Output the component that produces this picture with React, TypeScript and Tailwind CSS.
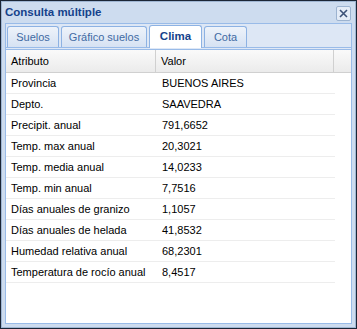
import React from 'react';

const rows: [string, string][] = [
  ['Provincia', 'BUENOS AIRES'],
  ['Depto.', 'SAAVEDRA'],
  ['Precipit. anual', '791,6652'],
  ['Temp. max anual', '20,3021'],
  ['Temp. media anual', '14,0233'],
  ['Temp. min anual', '7,7516'],
  ['Días anuales de granizo', '1,1057'],
  ['Días anuales de helada', '41,8532'],
  ['Humedad relativa anual', '68,2301'],
  ['Temperatura de rocío anual', '8,4517'],
];

const tabs: { label: string; w: string }[] = [
  { label: 'Suelos', w: 'w-[52px]' },
  { label: 'Gráfico suelos', w: 'w-[86px]' },
  { label: 'Clima', w: 'w-[53px]' },
  { label: 'Cota', w: 'w-[43px]' },
];

export default function App() {
  return (
    <div className="w-[357px] h-[329px] bg-[#1b2636] p-px font-['Liberation_Sans',Arial,sans-serif]">
      <div className="flex h-full flex-col border border-[#9fb6d3] bg-[#cddcef] px-[3px] pb-[3px]">
        <div className="flex h-[21px] items-center justify-between">
          <span className="text-[11.5px] font-bold text-[#15428b]">Consulta múltiple</span>
          <button className="mr-[1px] mt-[1px] flex h-[15px] w-[15px] items-center justify-center rounded-[2px] border border-[#9cb3d0] bg-[#e4ecf7]">
            <svg width="9" height="9" viewBox="0 0 9 9">
              <path d="M1 1L8 8M8 1L1 8" stroke="#3c5278" strokeWidth="1.6" />
            </svg>
          </button>
        </div>
        <div className="flex flex-1 flex-col border border-[#99bbe8] bg-[#dfe8f6]">
          <div className="flex h-[24px] items-end gap-[2px] border-b border-[#99bbe8] bg-[#dde7f5] pl-[1px]">
            {tabs.map((t) =>
              t.label === 'Clima' ? (
                <div
                  key={t.label}
                  className={`-mb-px flex h-[23px] ${t.w} items-center justify-center rounded-t-[3px] border border-b-0 border-[#8db2e3] bg-white text-[11.5px] font-bold text-[#15428b]`}
                >
                  {t.label}
                </div>
              ) : (
                <div
                  key={t.label}
                  className={`flex h-[21px] ${t.w} items-center justify-center rounded-t-[3px] border border-b-0 border-[#8db2e3] bg-gradient-to-b from-[#eef3fa] to-[#d6e2f3] text-[11px] text-[#416aa3]`}
                >
                  {t.label}
                </div>
              )
            )}
          </div>
          <div className="h-[2px] border-b border-[#99bbe8] bg-[#dfe8f6]" />
          <div className="flex-1 bg-white text-[11px] text-black">
            <div className="flex h-[23px] border-b border-[#d0d0d0] bg-gradient-to-b from-[#fafafa] to-[#ebebeb]">
              <div className="flex w-[150px] items-center border-r border-[#d0d0d0] pl-[5px]">Atributo</div>
              <div className="flex w-[178px] items-center border-r border-[#d0d0d0] pl-[5px]">Valor</div>
              <div className="flex-1" />
            </div>
            {rows.map(([a, v]) => (
              <div key={a} className="flex h-[21px] w-[329px] items-center whitespace-nowrap border-b border-[#ededed]">
                <div className="w-[150px] pl-[5px]">{a}</div>
                <div className="pl-[6px]">{v}</div>
              </div>
            ))}
          </div>
        </div>
      </div>
    </div>
  );
}
